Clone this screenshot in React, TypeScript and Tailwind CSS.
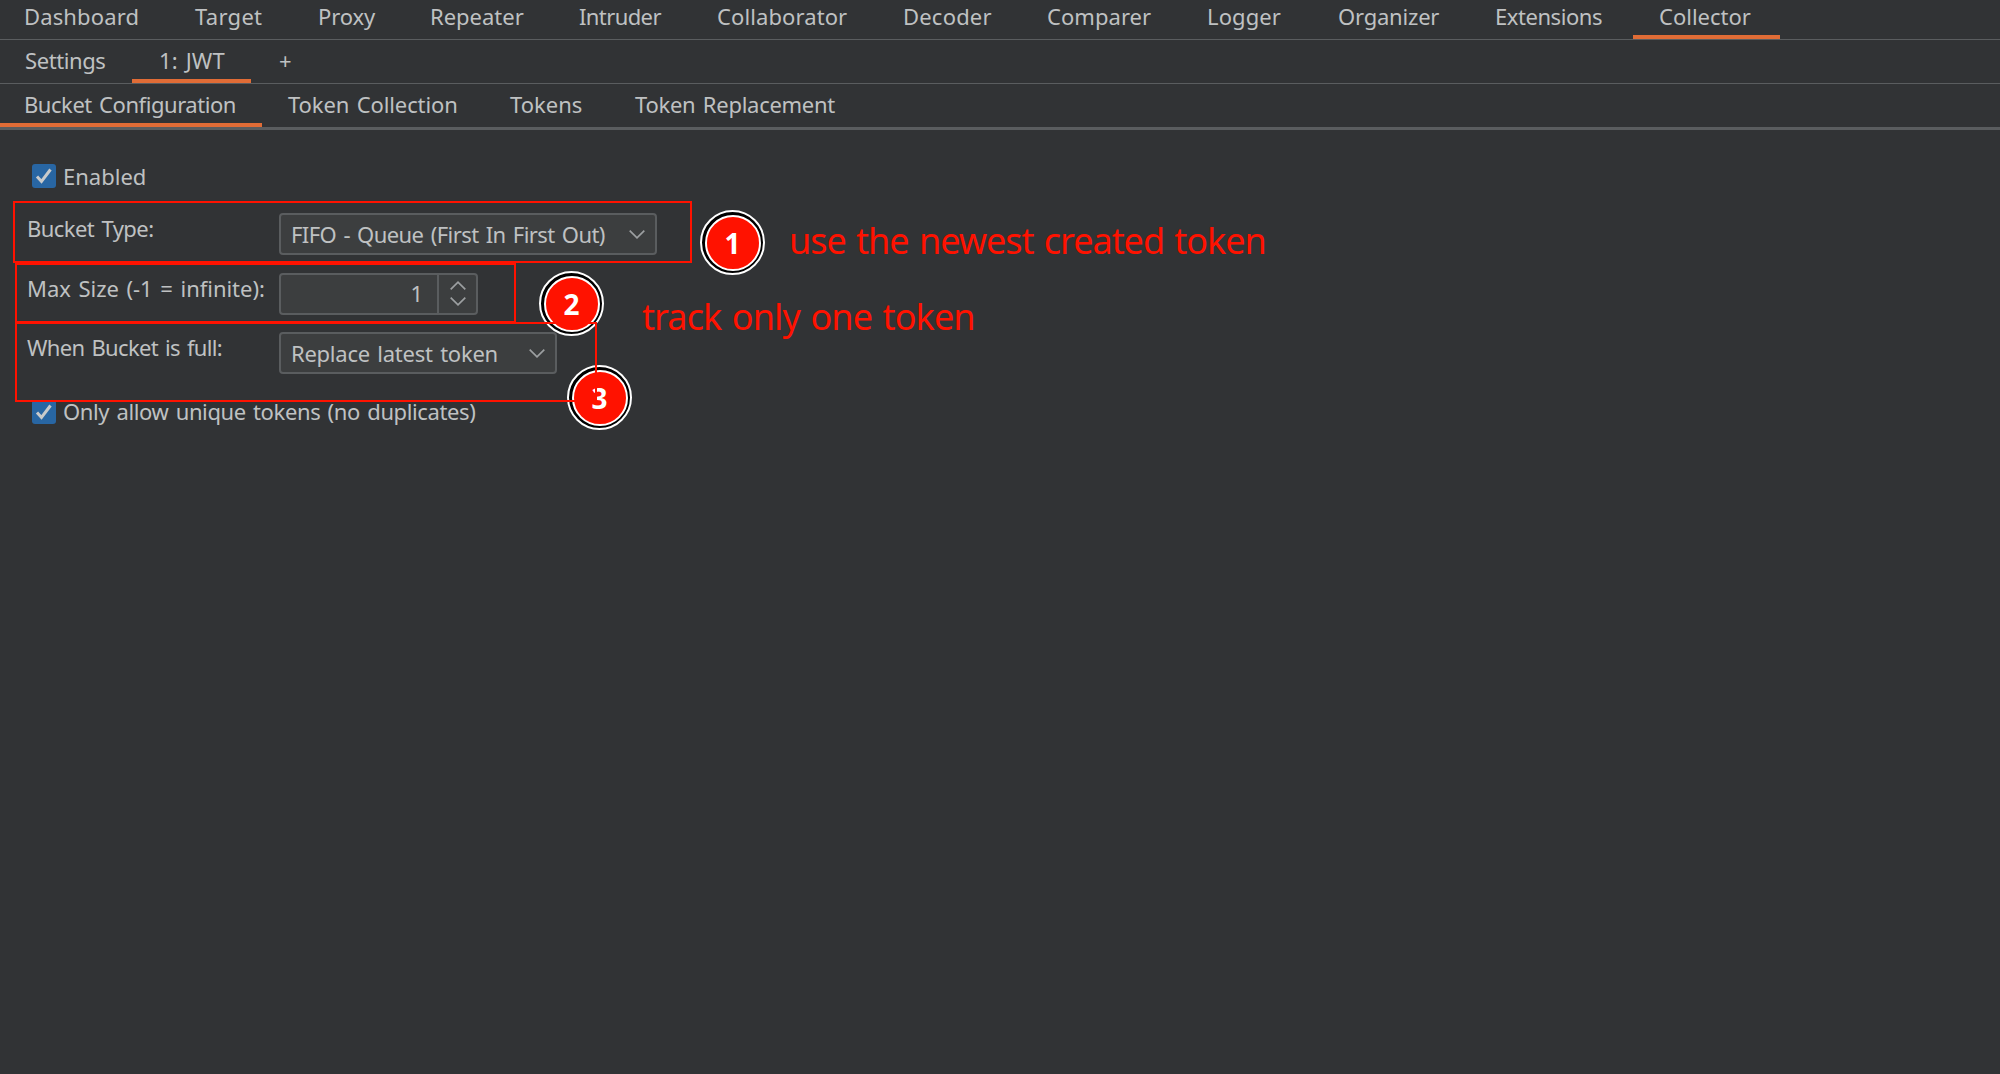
import React from 'react';

type Tab = {
  label: string;
  width: string;
  text: string;
  active?: boolean;
};

const mainTabs: Tab[] = [
  { label: 'Dashboard', width: 'w-[168px] pl-[24px]', text: 'tracking-[0.14px]' },
  { label: 'Target', width: 'w-[123px] pl-[27px]', text: 'tracking-[0.3px]' },
  { label: 'Proxy', width: 'w-[113px] pl-[27px]', text: 'tracking-[-0.1px]' },
  { label: 'Repeater', width: 'w-[149px] pl-[26px]', text: 'tracking-normal' },
  { label: 'Intruder', width: 'w-[138px] pl-[26px]', text: 'tracking-[-0.6px]' },
  { label: 'Collaborator', width: 'w-[186px] pl-[26px]', text: 'tracking-[0.1px]' },
  { label: 'Decoder', width: 'w-[144px] pl-[26px]', text: 'tracking-[0.2px]' },
  { label: 'Comparer', width: 'w-[161px] pl-[26px]', text: 'tracking-[0.05px]' },
  { label: 'Logger', width: 'w-[129px] pl-[25px]', text: 'tracking-[0.1px]' },
  { label: 'Organizer', width: 'w-[157px] pl-[27px]', text: 'tracking-[-0.2px]' },
  { label: 'Extensions', width: 'w-[165px] pl-[27px]', text: 'tracking-[-0.45px]' },
  { label: 'Collector', width: 'w-[147px] pl-[26px]', text: 'tracking-normal', active: true },
];

const bucketTabs: Tab[] = [
  { label: 'Settings', width: 'w-[132px] pl-[25px]', text: 'tracking-[-0.4px]' },
  { label: '1: JWT', width: 'w-[119px] pl-[27px]', text: 'tracking-[0.15px]', active: true },
  { label: '+', width: 'w-[60px] pl-[28px]', text: 'tracking-normal' },
];

const sectionTabs: Tab[] = [
  { label: 'Bucket Configuration', width: 'w-[262px] pl-[24px]', text: 'tracking-[-0.45px]', active: true },
  { label: 'Token Collection', width: 'w-[221px] pl-[26px]', text: 'tracking-[-0.12px]' },
  { label: 'Tokens', width: 'w-[125px] pl-[27px]', text: 'tracking-normal' },
  { label: 'Token Replacement', width: 'w-[260px] pl-[27px]', text: 'tracking-[-0.27px]' },
];

const TabBar: React.FC<{ tabs: Tab[]; className: string }> = ({ tabs, className }) => (
  <nav className={`flex border-[#5a5d5f] ${className}`}>
    {tabs.map((tab) => (
      <button
        key={tab.label}
        type="button"
        className={`flex shrink-0 items-end border-b-4 text-left whitespace-nowrap ${tab.width} ${
          tab.active ? 'border-[#e06c36]' : 'border-transparent'
        }`}
      >
        <span className={`leading-[30px] pb-[4px] [word-spacing:2px] ${tab.text}`}>{tab.label}</span>
      </button>
    ))}
  </nav>
);

const Checkbox: React.FC<{ label: string; text: string }> = ({ label, text }) => (
  <label className="flex h-6 items-center pl-8">
    <span className="flex size-6 items-center justify-center rounded-[3px] bg-[#2866a3]">
      <svg width="24" height="24" viewBox="0 0 24 24" fill="none">
        <path d="M5 12.5 L9.5 17.5 L18.5 5.5" stroke="#c8cacb" strokeWidth="3" />
      </svg>
    </span>
    <span className={`ml-[7px] whitespace-nowrap ${text}`}>{label}</span>
  </label>
);

const Chevron: React.FC<{ up?: boolean }> = ({ up }) => (
  <svg width="16" height="9" viewBox="0 0 16 9" fill="none" className={up ? 'rotate-180' : ''}>
    <path d="M0.7 0.7 L8 7.8 L15.3 0.7" stroke="#9c9fa1" strokeWidth="1.7" />
  </svg>
);

const Select: React.FC<{ value: string; width: string; text: string }> = ({ value, width, text }) => (
  <div className={`flex h-[42px] items-center justify-between rounded-[4px] border-2 border-[#5a5d5f] bg-[#3c3e3f] pr-[10px] pl-[10px] ${width}`}>
    <span className={`whitespace-nowrap ${text}`}>{value}</span>
    <Chevron />
  </div>
);

const Row: React.FC<{ label: string; text: string; children: React.ReactNode }> = ({ label, text, children }) => (
  <div className="flex h-[59.5px] items-start">
    <span className={`w-[252px] shrink-0 leading-[30px] whitespace-nowrap ${text}`}>{label}</span>
    {children}
  </div>
);

const Badge: React.FC<{ n: number; position: string }> = ({ n, position }) => (
  <div className={`absolute size-[65px] rounded-full border-2 border-white bg-black p-[2.5px] ${position}`}>
    <div className="flex size-full items-center justify-center rounded-full border-2 border-white bg-[#ff1200] text-[28px] leading-none font-bold text-white">
      {n}
    </div>
  </div>
);

export default function App() {
  return (
    <div className="relative h-[1074px] w-[2000px] overflow-hidden bg-[#313335] font-['Noto_Sans',sans-serif] text-[22px] text-[#bfc1c2]">
      <TabBar tabs={mainTabs} className="h-10 border-b" />
      <TabBar tabs={bucketTabs} className="h-11 border-b" />
      <TabBar tabs={sectionTabs} className="h-[46px] border-b-3" />

      <main className="pt-[34px] [word-spacing:2px]">
        <Checkbox label="Enabled" text="tracking-normal" />
        <div className="mt-[25px] pl-[27px]">
          <Row label="Bucket Type:" text="tracking-[-0.55px]">
            <Select value="FIFO - Queue (First In First Out)" width="w-[378px]" text="tracking-[-0.56px]" />
          </Row>
          <Row label="Max Size (-1 = infinite):" text="tracking-[-0.04px]">
            <div className="flex h-[42px] w-[199px] rounded-[4px] border-2 border-[#5a5d5f] bg-[#3c3e3f]">
              <span className="flex flex-1 items-center justify-end pr-[14px]">1</span>
              <span className="flex w-[39px] flex-col items-center justify-center gap-[7px] border-l-2 border-[#5a5d5f]">
                <Chevron up />
                <Chevron />
              </span>
            </div>
          </Row>
          <Row label="When Bucket is full:" text="tracking-[-0.67px]">
            <Select value="Replace latest token" width="w-[278px]" text="tracking-[-0.25px]" />
          </Row>
        </div>
        <div className="mt-[8px]">
          <Checkbox label="Only allow unique tokens (no duplicates)" text="tracking-[-0.39px]" />
        </div>
      </main>

      {/* annotations over the form */}
      <Badge n={1} position="top-[210px] left-[700px]" />
      <Badge n={2} position="top-[271px] left-[539px]" />
      <Badge n={3} position="top-[365px] left-[567px]" />
      <div className="absolute top-[201px] left-[13px] h-[62px] w-[679px] border-2 border-[#ff1200]" />
      <div className="absolute top-[263px] left-[15px] h-[60px] w-[501px] border-2 border-[#ff1200]" />
      <div className="absolute top-[322px] left-[15px] h-[80px] w-[582px] border-2 border-[#ff1200]" />
      <p className="absolute top-[216px] left-[789px] text-[36px] leading-[50px] tracking-[-1.02px] [word-spacing:2px] whitespace-nowrap text-[#ff1200]">
        use the newest created token
      </p>
      <p className="absolute top-[292px] left-[642px] text-[36px] leading-[50px] tracking-[-0.89px] [word-spacing:2px] whitespace-nowrap text-[#ff1200]">
        track only one token
      </p>
    </div>
  );
}
